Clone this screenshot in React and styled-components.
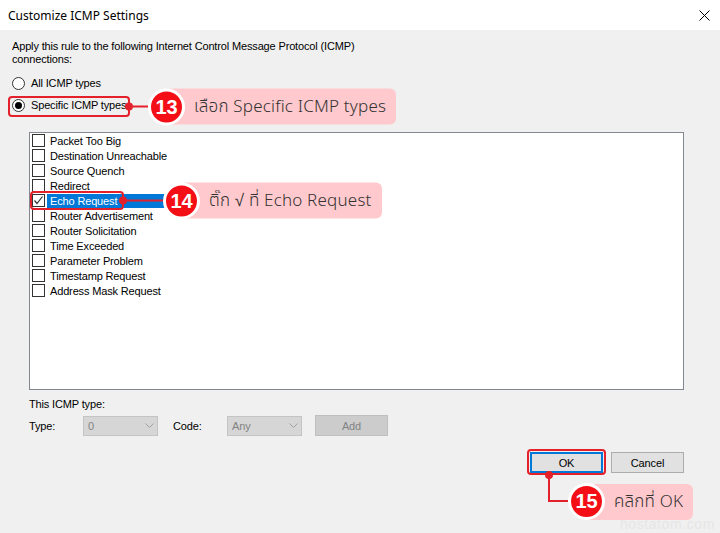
import React from "react";
import styled, { createGlobalStyle } from "styled-components";

const RED = "#e4202b";

const GlobalStyle = createGlobalStyle`
  html, body { margin: 0; padding: 0; background: #f0f0f0; }
  #root { width: 720px; height: 533px; }
`;

const Window = styled.div`
  width: 720px;
  height: 533px;
  display: flex;
  flex-direction: column;
  background: #f0f0f0;
  position: relative;
  overflow: hidden;
  font-family: "Liberation Sans", Arial, sans-serif;
  font-size: 11px;
  letter-spacing: -0.15px;
  color: #000;
`;

const TitleBar = styled.div`
  height: 30px;
  flex: none;
  background: #fff;
  display: flex;
  align-items: center;
  justify-content: space-between;
  padding: 0 10px 0 8px;
  font-family: "Noto Sans", "Open Sans", sans-serif;
  font-size: 12px;
  letter-spacing: 0;
  color: #000;
`;

const Body = styled.div`
  flex: 1;
  display: flex;
  flex-direction: column;
  padding: 10px 36px 0 12px;
`;

const Description = styled.p`
  margin: 0;
  line-height: 13px;
`;

const RadioGroup = styled.div`
  margin-top: 6px;
  display: flex;
  flex-direction: column;
  align-items: flex-start;
`;

const RadioRow = styled.label`
  height: 22px;
  display: flex;
  align-items: center;
  gap: 6px;
  position: relative;
`;

const RadioCircle = styled.span`
  width: 13px;
  height: 13px;
  box-sizing: border-box;
  border-radius: 50%;
  border: 1px solid #333;
  background: #fff;
  display: flex;
  align-items: center;
  justify-content: center;
  &::after {
    content: "";
    display: ${(p) => (p.$checked ? "block" : "none")};
    width: 7px;
    height: 7px;
    border-radius: 50%;
    background: #000;
  }
`;

const Indented = styled.div`
  margin-left: 17px;
  display: flex;
  flex-direction: column;
`;

const ListBox = styled.div`
  margin-top: 16px;
  height: 258px;
  box-sizing: border-box;
  border: 1px solid #828790;
  background: #fff;
  padding: 0 2px;
  display: flex;
  flex-direction: column;
`;

const ItemRow = styled.div`
  height: 15px;
  display: flex;
  align-items: center;
  position: relative;
`;

const CheckBox = styled.span`
  width: 13px;
  height: 13px;
  box-sizing: border-box;
  border: 1px solid #333;
  background: #fff;
  flex: none;
  display: flex;
  align-items: center;
  justify-content: center;
`;

const ItemLabel = styled.span`
  margin-left: 2px;
  padding: 0 3px;
  height: 14px;
  line-height: 14px;
  box-sizing: border-box;
  min-width: ${(p) => (p.$selected ? "120px" : "0")};
  background: ${(p) => (p.$selected ? "#0078d7" : "transparent")};
  color: ${(p) => (p.$selected ? "#fff" : "#000")};
`;

const SectionLabel = styled.div`
  margin-top: 8px;
  line-height: 13px;
`;

const TypeRow = styled.div`
  margin-top: 4px;
  height: 21px;
  display: flex;
  align-items: center;
`;

const FieldLabel = styled.span`
  width: ${(p) => p.$w}px;
  flex: none;
`;

const Combo = styled.div`
  width: 75px;
  height: 20px;
  box-sizing: border-box;
  border: 1px solid #c4c4c4;
  background: #d6d6d6;
  color: #838383;
  display: flex;
  align-items: center;
  justify-content: space-between;
  padding: 0 3px 0 4px;
  margin-right: ${(p) => p.$mr || 0}px;
`;

const DisabledButton = styled.div`
  width: 73px;
  height: 21px;
  box-sizing: border-box;
  border: 1px solid #bfbfbf;
  background: #cccccc;
  color: #838383;
  display: flex;
  align-items: center;
  justify-content: center;
`;

const ButtonRow = styled.div`
  margin-top: 16px;
  display: flex;
  justify-content: flex-end;
  gap: 8px;
`;

const ButtonWrap = styled.div`
  position: relative;
`;

const Button = styled.div`
  width: 73px;
  height: 21px;
  box-sizing: border-box;
  border: ${(p) => (p.$default ? "2px solid #0078d7" : "1px solid #adadad")};
  background: #e1e1e1;
  display: flex;
  align-items: center;
  justify-content: center;
  color: #000;
`;

/* ---------- annotation overlays ---------- */

const Marker = styled.div`
  position: absolute;
  left: ${(p) => p.$l}px;
  top: ${(p) => p.$t}px;
  width: ${(p) => p.$w}px;
  height: ${(p) => p.$h}px;
  box-sizing: border-box;
  border: 2px solid ${RED};
  border-radius: 4px;
  z-index: 3;
`;

const SideCallout = styled.div`
  position: absolute;
  left: calc(100% - 3px);
  top: 50%;
  transform: translateY(-50%);
  display: flex;
  align-items: center;
  white-space: nowrap;
`;

const Dot = styled.span`
  width: 8px;
  height: 8px;
  border-radius: 50%;
  background: ${RED};
  flex: none;
`;

const Leader = styled.span`
  width: ${(p) => p.$len}px;
  height: 2px;
  background: ${RED};
  flex: none;
`;

const Badge = styled.span`
  width: 37px;
  height: 37px;
  box-sizing: border-box;
  border-radius: 50%;
  border: 3px solid #fff;
  background: #f40f16;
  color: #fff;
  font-family: "Liberation Sans", Arial, sans-serif;
  font-weight: bold;
  font-size: 20px;
  letter-spacing: 0;
  display: flex;
  align-items: center;
  justify-content: center;
  position: relative;
  z-index: 1;
  flex: none;
`;

const Pill = styled.span`
  height: 36px;
  margin-left: -20px;
  padding: 0 10px 0 29px;
  background: #ffc9cd;
  border-radius: 6px;
  display: flex;
  align-items: center;
  font-family: "Noto Sans", "Noto Sans Thai", "Leelawadee UI", Tahoma, sans-serif;
  font-size: 17px;
  font-weight: 300;
  letter-spacing: 0.2px;
  color: #333;
  white-space: nowrap;
`;

const DownCallout = styled.div`
  position: absolute;
  left: 19px;
  top: calc(100% + 2px);
  display: flex;
  align-items: flex-start;
  white-space: nowrap;
`;

const Elbow = styled.span`
  position: relative;
  width: 20px;
  height: 27px;
  box-sizing: border-box;
  border-left: 2px solid ${RED};
  border-bottom: 2px solid ${RED};
  flex: none;
  &::before {
    content: "";
    position: absolute;
    left: -5px;
    top: -4px;
    width: 8px;
    height: 8px;
    border-radius: 50%;
    background: ${RED};
  }
`;

const BadgeGroup = styled.span`
  margin-top: 8px;
  display: flex;
  align-items: center;
`;

const Watermark = styled.div`
  position: absolute;
  right: 5px;
  bottom: 0;
  font-family: "Liberation Sans", Arial, sans-serif;
  font-size: 14px;
  letter-spacing: 0.6px;
  color: #e6e6e6;
  line-height: 17px;
`;

const CloseIcon = () => (
  <svg width="11" height="11" viewBox="0 0 11 11">
    <path d="M0.5 0.5 L10.5 10.5 M10.5 0.5 L0.5 10.5" stroke="#000" strokeWidth="1" fill="none" />
  </svg>
);

const Chevron = () => (
  <svg width="9" height="5" viewBox="0 0 9 5">
    <path d="M0.5 0.5 L4.5 4.5 L8.5 0.5" stroke="#a0a0a0" strokeWidth="1" fill="none" />
  </svg>
);

const Check = () => (
  <svg width="11" height="11" viewBox="0 0 11 11">
    <path d="M1.5 5.5 L4 8.5 L9.5 1.5" stroke="#333" strokeWidth="1.2" fill="none" />
  </svg>
);

const items = [
  "Packet Too Big",
  "Destination Unreachable",
  "Source Quench",
  "Redirect",
  "Echo Request",
  "Router Advertisement",
  "Router Solicitation",
  "Time Exceeded",
  "Parameter Problem",
  "Timestamp Request",
  "Address Mask Request",
];

export default function App() {
  return (
    <>
      <GlobalStyle />
      <Window>
        <TitleBar>
          <span>Customize ICMP Settings</span>
          <CloseIcon />
        </TitleBar>
        <Body>
          <Description>
            Apply this rule to the following Internet Control Message Protocol (ICMP)
            <br />
            connections:
          </Description>
          <RadioGroup>
            <RadioRow>
              <RadioCircle />
              All ICMP types
            </RadioRow>
            <RadioRow>
              <RadioCircle $checked />
              Specific ICMP types
              <Marker $l={-4} $t={2} $w={122} $h={21}>
                <SideCallout>
                  <Dot />
                  <Leader $len={15} />
                  <Badge>13</Badge>
                  <Pill>เลือก Specific ICMP types</Pill>
                </SideCallout>
              </Marker>
            </RadioRow>
          </RadioGroup>

          <Indented>
            <ListBox>
              {items.map((name) => {
                const sel = name === "Echo Request";
                return (
                  <ItemRow key={name}>
                    <CheckBox>{sel && <Check />}</CheckBox>
                    <ItemLabel $selected={sel}>{name}</ItemLabel>
                    {sel && (
                      <Marker $l={-2} $t={-2} $w={94} $h={19}>
                        <SideCallout>
                          <Dot />
                          <Leader $len={36} />
                          <Badge>14</Badge>
                          <Pill>ติ๊ก √ ที่ Echo Request</Pill>
                        </SideCallout>
                      </Marker>
                    )}
                  </ItemRow>
                );
              })}
            </ListBox>

            <SectionLabel>This ICMP type:</SectionLabel>
            <TypeRow>
              <FieldLabel $w={54}>Type:</FieldLabel>
              <Combo $mr={15}>
                <span>0</span>
                <Chevron />
              </Combo>
              <FieldLabel $w={54}>Code:</FieldLabel>
              <Combo $mr={13}>
                <span>Any</span>
                <Chevron />
              </Combo>
              <DisabledButton>Add</DisabledButton>
            </TypeRow>
          </Indented>

          <ButtonRow>
            <ButtonWrap>
              <Button $default>OK</Button>
              <Marker $l={-3} $t={-3} $w={79} $h={26}>
                <DownCallout>
                  <Elbow />
                  <BadgeGroup>
                    <Badge>15</Badge>
                    <Pill>คลิกที่ OK</Pill>
                  </BadgeGroup>
                </DownCallout>
              </Marker>
            </ButtonWrap>
            <ButtonWrap>
              <Button>Cancel</Button>
            </ButtonWrap>
          </ButtonRow>
        </Body>
        <Watermark>hostatom.com</Watermark>
      </Window>
    </>
  );
}
